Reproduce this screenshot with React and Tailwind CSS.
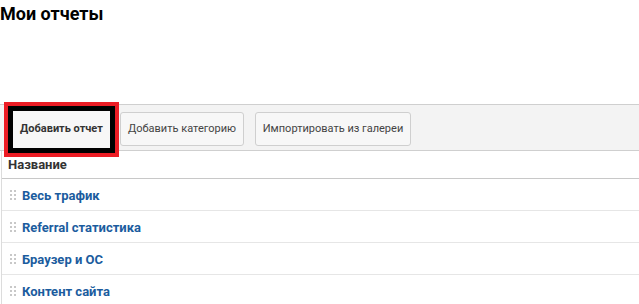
import React from 'react';

const REPORTS = ['Весь трафик', 'Referral статистика', 'Браузер и ОС', 'Контент сайта'];

// little 2x3 dotted drag handle
const Handle = () => (
    <svg width="6" height="12" viewBox="0 0 6 12" className="shrink-0">
        {[0, 4, 8].map((y) => (
            <g key={y} fill="#c8c8c8">
                <rect x="0" y={y} width="2" height="2" />
                <rect x="4" y={y} width="2" height="2" />
            </g>
        ))}
    </svg>
);

const App = () => {
    return (
        <div className="w-[639px] h-[304px] overflow-hidden bg-white font-['Roboto','Liberation_Sans',sans-serif]">
            <h1 className="pt-[3px] text-[18px] leading-[22px] font-bold text-black">Мои отчеты</h1>

            {/* toolbar */}
            <div className="mt-[79px] h-[47px] flex items-start pt-[7px] pl-[8px] bg-[#f3f3f3] border-y border-[#cfcfcf]">
                <button className="-mt-[6px] w-[107px] h-[47px] border-[5px] border-black outline-[4px] outline-solid outline-[#ec1c24] bg-[#f7f7f7] text-[11px] font-bold text-[#333]">
                    Добавить отчет
                </button>
                <button className="ml-[5px] w-[124px] h-[34px] rounded-[3px] border border-[#cfcfcf] bg-[#f7f7f7] text-[11px] text-[#444]">
                    Добавить категорию
                </button>
                <button className="ml-[11px] w-[156px] h-[34px] rounded-[3px] border border-[#cfcfcf] bg-[#f7f7f7] text-[11px] text-[#444]">
                    Импортировать из галереи
                </button>
            </div>

            {/* table */}
            <div className="ml-[1px] border-l border-[#dcdcdc]">
                <div className="h-[28px] flex items-center pl-[6px] pt-[1px] border-b border-[#c8c8c8] text-[13px] font-bold text-[#333]">
                    Название
                </div>
                {REPORTS.map((name) => (
                    <div key={name} className="h-[32px] flex items-center gap-[6px] pl-[8px] pt-[2px] border-b border-[#e6e6e6]">
                        <Handle />
                        <span className="text-[13px] font-bold text-[#1b5c9e]">{name}</span>
                    </div>
                ))}
            </div>
        </div>
    );
};

export default App;
